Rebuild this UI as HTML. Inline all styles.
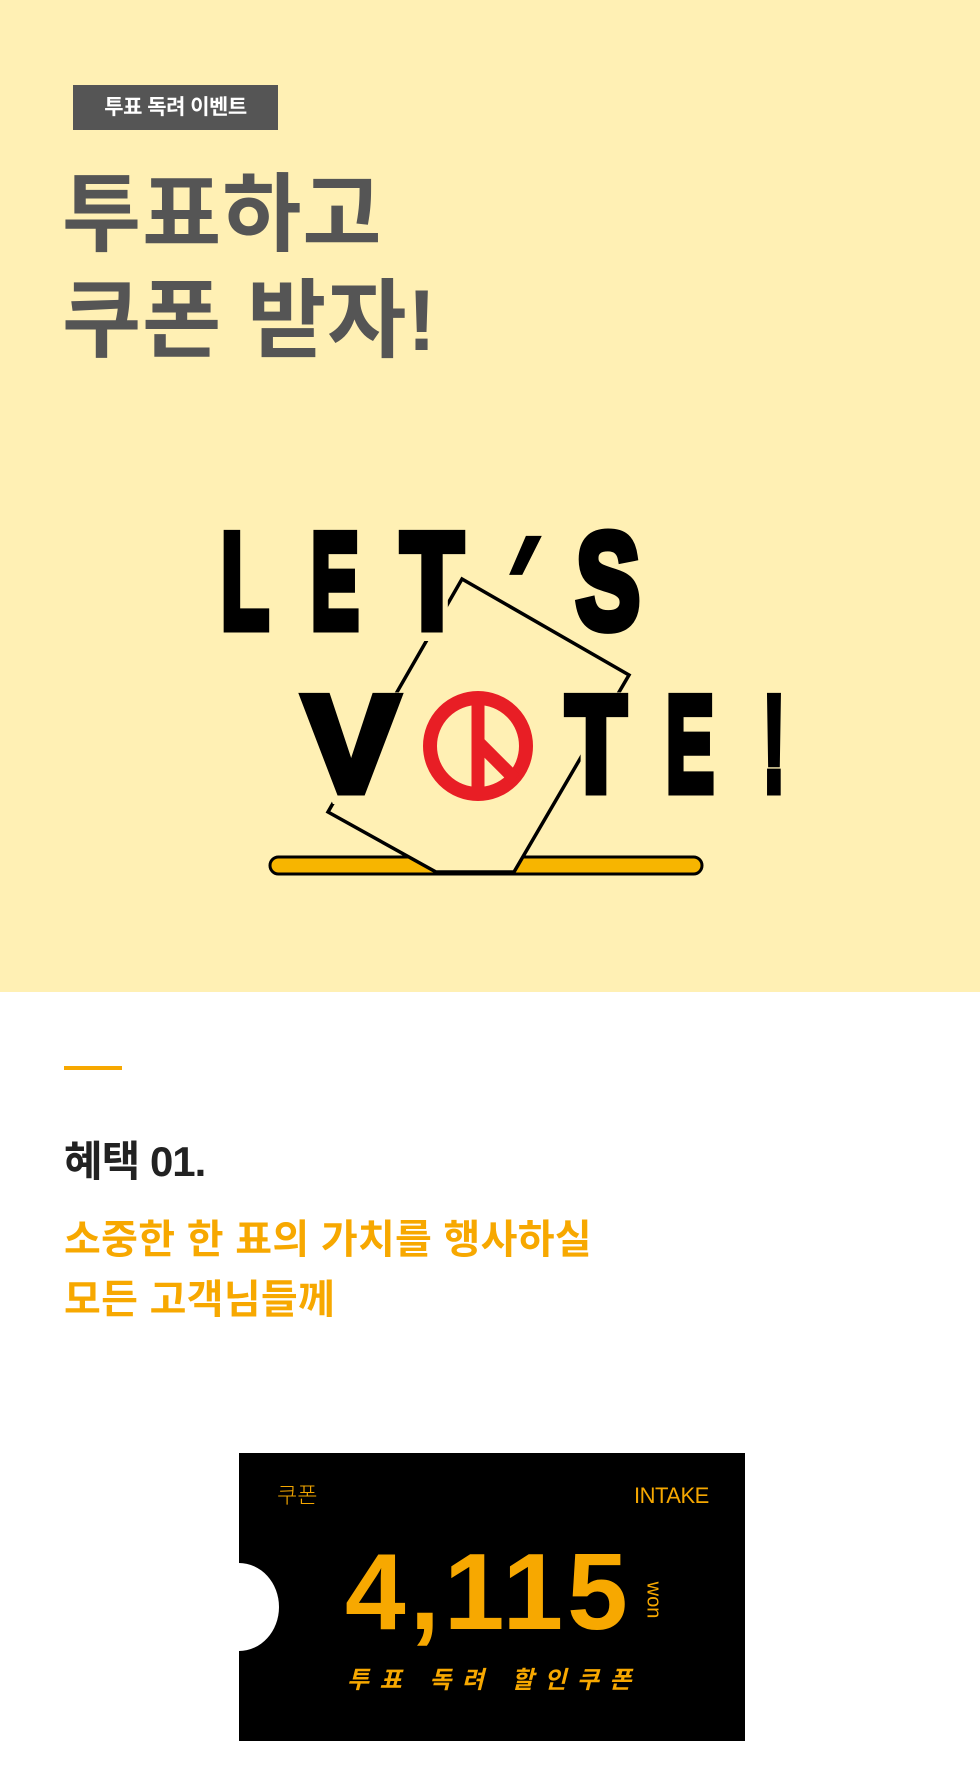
<!DOCTYPE html>
<html><head><meta charset="utf-8">
<style>
*{margin:0;padding:0;box-sizing:border-box}
body{width:980px;height:1770px;background:#fff;position:relative;overflow:hidden;font-family:"Liberation Sans","Noto Sans CJK KR",sans-serif}
.top{position:absolute;left:0;top:0;width:980px;height:992px;background:#fff0b4}
.tag{position:absolute;left:73px;top:85px;width:205px;height:45px;background:#555;color:#fff;font-weight:700;font-size:21px;line-height:45px;text-align:center;letter-spacing:-0.5px}
.h1{position:absolute;left:62px;top:162px;font-size:86px;font-weight:700;color:#555;line-height:106px;letter-spacing:1px;white-space:nowrap}
.abs{position:absolute;white-space:nowrap}
</style></head><body>
<div class="top">
<div class="tag">투표 독려 이벤트</div>
<div class="h1">투표하고<br>쿠폰 받자!</div>
<svg width="980" height="992" style="position:absolute;left:0;top:0">
<defs><clipPath id="cc"><circle cx="478" cy="746" r="50"/></clipPath></defs>
<rect x="270" y="857" width="432" height="17" rx="8.5" fill="#f7b500" stroke="#000" stroke-width="3"/>
<polygon points="462,579 629,675 514,872 436,872 328,812" fill="#fff0b4" stroke="#000" stroke-width="3.5" stroke-linejoin="miter"/>
<g font-family="Liberation Sans, sans-serif" font-weight="700" font-size="136" fill="#fff0b4" stroke="#fff0b4" stroke-width="18">
<text x="217" y="632" textLength="56" lengthAdjust="spacingAndGlyphs">L</text>
<text x="307" y="632" textLength="56" lengthAdjust="spacingAndGlyphs">E</text>
<text x="397" y="632" textLength="70" lengthAdjust="spacingAndGlyphs">T</text>
<text x="572" y="632" textLength="72" lengthAdjust="spacingAndGlyphs">S</text>
<text x="300" y="795" textLength="102" lengthAdjust="spacingAndGlyphs">V</text>
<text x="562" y="795" textLength="68" lengthAdjust="spacingAndGlyphs">T</text>
<text x="662" y="795" textLength="56" lengthAdjust="spacingAndGlyphs">E</text>
<text x="759" y="795" textLength="30" lengthAdjust="spacingAndGlyphs">!</text>
</g>
<g font-family="Liberation Sans, sans-serif" font-weight="700" font-size="136" fill="#000" stroke="#000" stroke-width="9" stroke-linejoin="miter">
<text x="221" y="628" textLength="48" lengthAdjust="spacingAndGlyphs">L</text>
<text x="311" y="628" textLength="48" lengthAdjust="spacingAndGlyphs">E</text>
<text x="401" y="628" textLength="62" lengthAdjust="spacingAndGlyphs">T</text>
<text x="576" y="628" textLength="64" lengthAdjust="spacingAndGlyphs">S</text>
<text x="304" y="791" textLength="94" lengthAdjust="spacingAndGlyphs">V</text>
<text x="566" y="791" textLength="60" lengthAdjust="spacingAndGlyphs">T</text>
<text x="666" y="791" textLength="48" lengthAdjust="spacingAndGlyphs">E</text>
<text x="763" y="791" textLength="22" lengthAdjust="spacingAndGlyphs">!</text>
</g>
<text transform="translate(478,632) skewX(-25)" x="0" y="0" font-family="Liberation Sans, sans-serif" font-weight="700" font-size="136" fill="#000" stroke="#000" stroke-width="5" textLength="22" lengthAdjust="spacingAndGlyphs">'</text>
<circle cx="478" cy="746" r="48" fill="none" stroke="#e81e25" stroke-width="14"/>
<g clip-path="url(#cc)" stroke="#e81e25" stroke-width="13">
<line x1="478" y1="690" x2="478" y2="805"/>
<line x1="478" y1="742" x2="525" y2="789"/>
</g>
</svg>
</div>
<div class="abs" style="left:64px;top:1066px;width:58px;height:4px;background:#f7a800"></div>
<div class="abs" style="left:64px;top:1132px;font-size:42px;font-weight:700;color:#222;letter-spacing:-1px;line-height:60px">혜택 01.</div>
<div class="abs" style="left:64px;top:1210px;font-size:40px;font-weight:700;color:#f7a800;letter-spacing:0.3px;line-height:60px">소중한 한 표의 가치를 행사하실<br>모든 고객님들께</div>
<div class="abs" style="left:239px;top:1453px;width:506px;height:288px;background:#000"></div>
<div class="abs" style="left:199px;top:1563px;width:80px;height:88px;border-radius:50%;background:#fff"></div>
<div class="abs" style="left:277px;top:1480px;font-size:22px;color:#f5a700;font-weight:300;line-height:32px">쿠폰</div>
<div class="abs" style="left:634px;top:1480px;font-size:22px;color:#f5a700;line-height:32px;letter-spacing:-0.5px">INTAKE</div>
<div class="abs" style="left:345px;top:1522px;font-size:109px;font-weight:700;color:#f7a800;line-height:140px;letter-spacing:4px">4,115</div>
<div class="abs" style="left:635px;top:1588px;font-size:20px;color:#f7a800;transform:rotate(90deg);line-height:24px">won</div>
<div class="abs" style="left:347px;top:1664px;font-size:24px;font-weight:700;font-style:italic;color:#f7a800;letter-spacing:10.5px;line-height:34px;white-space:pre">투표 독려 할인쿠폰</div>
</body></html>
